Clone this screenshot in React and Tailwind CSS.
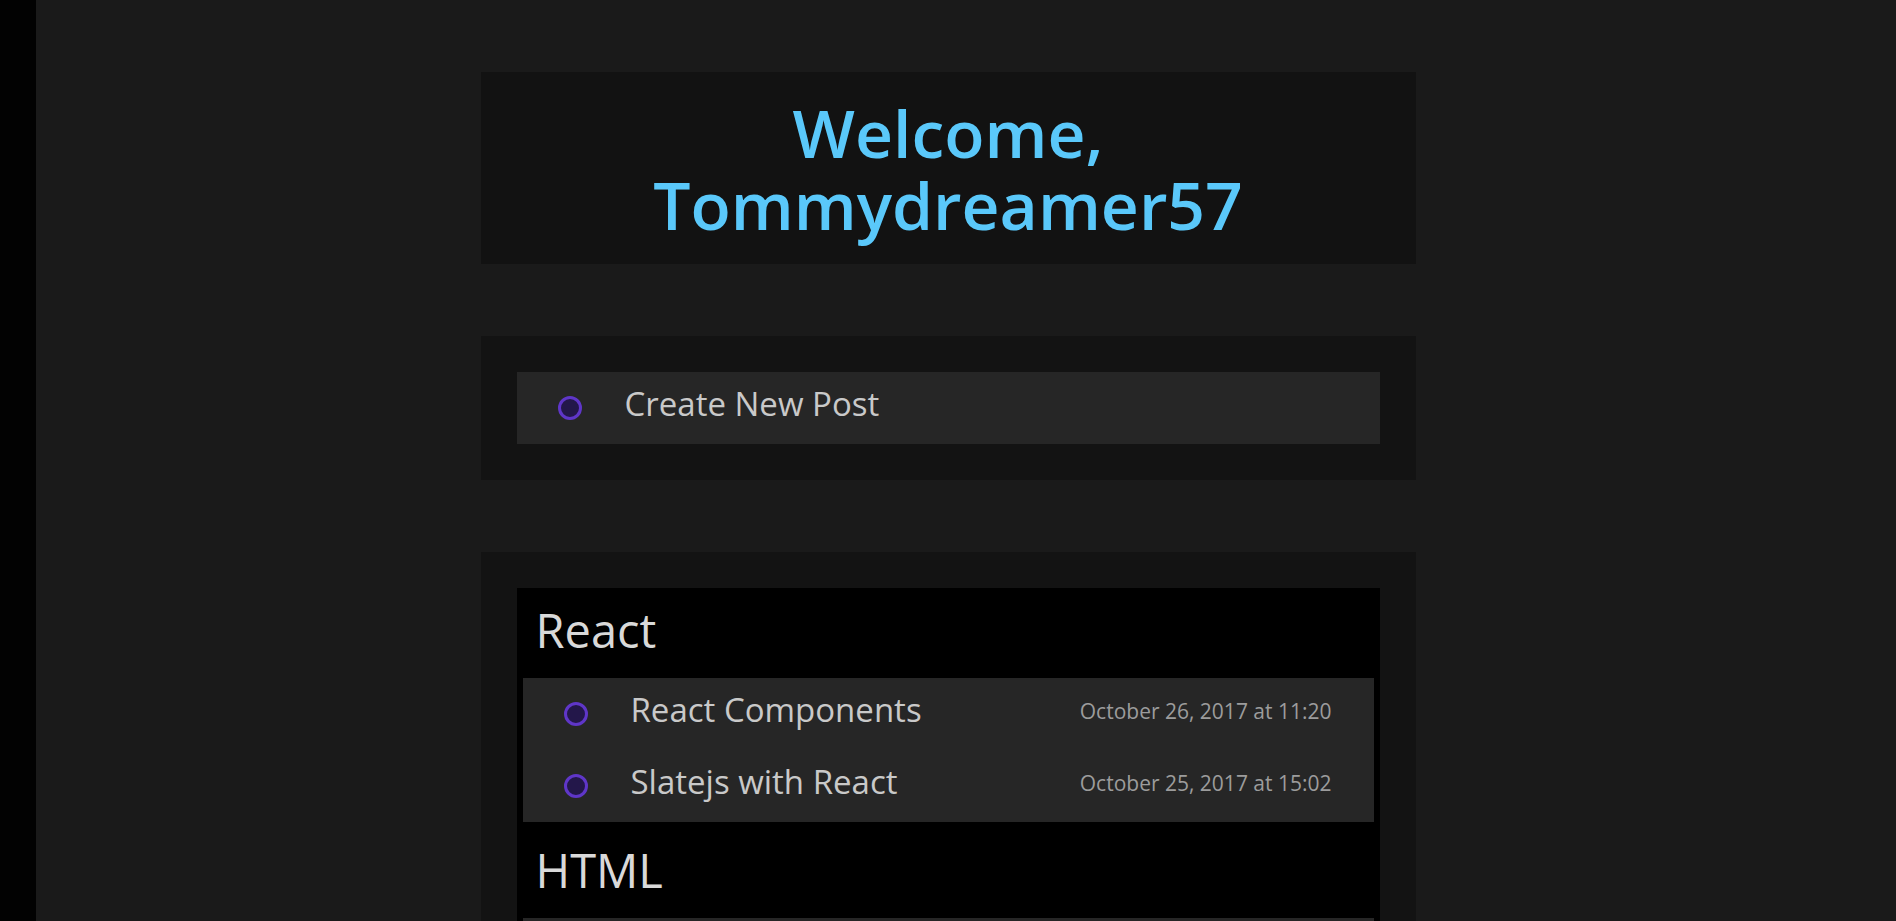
const posts = [
  {
    topic: "React",
    items: [
      { title: "React Components", date: "October 26, 2017 at 11:20" },
      { title: "Slatejs with React", date: "October 25, 2017 at 15:02" },
    ],
  },
  {
    topic: "HTML",
    items: [
      { title: "Semantic Markup", date: "October 24, 2017 at 09:41" },
      { title: "Forms and Inputs", date: "October 22, 2017 at 18:15" },
    ],
  },
];

const Dot = () => (
  <span className="w-[24px] h-[24px] shrink-0 rounded-full border-[3px] border-[#5f36c8] bg-[#23174a]"></span>
);

const App = () => {
  return (
    <div className="flex min-h-screen bg-[#1a1a1a] font-['Open_Sans',sans-serif]">
      {/* sidebar strip */}
      <div className="w-[36px] shrink-0 bg-[#020202]"></div>

      <main className="flex-1 pr-[36px] pt-[72px] pb-[72px] flex flex-col items-center gap-[72px]">
        <div className="w-[935px] h-[192px] bg-[#121212] flex items-center justify-center">
          <h1 className="text-center text-[66px] leading-[72px] font-semibold text-[#5ac8fa]">
            Welcome,
            <br />
            Tommydreamer57
          </h1>
        </div>

        <div className="w-[935px] p-[36px] bg-[#131313]">
          <button className="w-full h-[72px] flex items-center pl-[41px] bg-[#262626] cursor-pointer">
            <Dot />
            <span className="ml-[43px] pb-[8px] text-[33px] text-[#c9c9c9]">
              Create New Post
            </span>
          </button>
        </div>

        <div className="w-[935px] p-[36px] bg-[#131313]">
          <div className="bg-black px-[6px] pb-[6px]">
            {posts.map((group) => (
              <section key={group.topic}>
                <h2 className="h-[90px] flex items-center pl-[13px] pb-[6px] text-[47px] text-[#d9d9d9]">
                  {group.topic}
                </h2>
                <ul className="bg-[#262626] mb-[6px]">
                  {group.items.map((post) => (
                    <li
                      key={post.title}
                      className="h-[72px] flex items-center pl-[41px] pr-[42px]"
                    >
                      <Dot />
                      <span className="ml-[43px] pb-[8px] text-[33px] text-[#c9c9c9]">
                        {post.title}
                      </span>
                      <span className="ml-auto pb-[5px] text-[21px] text-[#9c9c9c]">
                        {post.date}
                      </span>
                    </li>
                  ))}
                </ul>
              </section>
            ))}
          </div>
        </div>
      </main>
    </div>
  );
};

export default App;
